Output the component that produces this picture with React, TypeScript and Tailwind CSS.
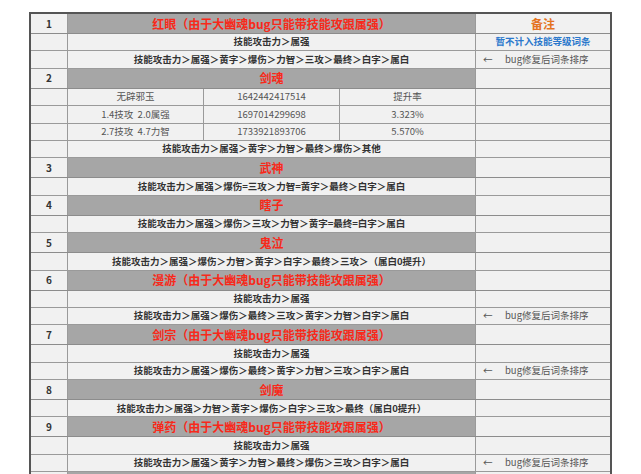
import React from 'react'

type Note = 'bug' | 'skip' | 'head' | undefined

type Row =
  | { kind: 'head'; no: string; title: string; note?: Note }
  | { kind: 'text'; text: string; note?: Note }
  | { kind: 'split'; cells: string[] }

const BUG = '（由于大幽魂bug只能带技能攻跟属强）'

const rows: Row[] = [
  { kind: 'head', no: '1', title: '红眼' + BUG, note: 'head' },
  { kind: 'text', text: '技能攻击力＞属强', note: 'skip' },
  { kind: 'text', text: '技能攻击力＞属强＞黄字＞爆伤＞力智＞三攻＞最终＞白字＞属白', note: 'bug' },
  { kind: 'head', no: '2', title: '剑魂' },
  { kind: 'split', cells: ['无辟邪玉', '1642442417514', '提升率'] },
  { kind: 'split', cells: ['1.4技攻  2.0属强', '1697014299698', '3.323%'] },
  { kind: 'split', cells: ['2.7技攻  4.7力智', '1733921893706', '5.570%'] },
  { kind: 'text', text: '技能攻击力＞属强＞黄字＞力智＞最终＞爆伤＞其他' },
  { kind: 'head', no: '3', title: '武神' },
  { kind: 'text', text: '技能攻击力＞属强＞爆伤=三攻＞力智=黄字＞最终＞白字＞属白' },
  { kind: 'head', no: '4', title: '瞎子' },
  { kind: 'text', text: '技能攻击力＞属强＞爆伤＞三攻＞力智＞黄字=最终=白字＞属白' },
  { kind: 'head', no: '5', title: '鬼泣' },
  { kind: 'text', text: '技能攻击力＞属强＞爆伤＞力智＞黄字＞白字＞最终＞三攻＞（属白0提升）' },
  { kind: 'head', no: '6', title: '漫游' + BUG },
  { kind: 'text', text: '技能攻击力＞属强' },
  { kind: 'text', text: '技能攻击力＞属强＞爆伤＞最终＞三攻＞黄字＞力智＞白字＞属白', note: 'bug' },
  { kind: 'head', no: '7', title: '剑宗' + BUG },
  { kind: 'text', text: '技能攻击力＞属强' },
  { kind: 'text', text: '技能攻击力＞属强＞爆伤＞最终＞黄字＞力智＞三攻＞白字＞属白', note: 'bug' },
  { kind: 'head', no: '8', title: '剑魔' },
  { kind: 'text', text: '技能攻击力＞属强＞力智＞黄字＞爆伤＞白字＞三攻＞最终（属白0提升）' },
  { kind: 'head', no: '9', title: '弹药' + BUG },
  { kind: 'text', text: '技能攻击力＞属强' },
  { kind: 'text', text: '技能攻击力＞属强＞黄字＞力智＞最终＞爆伤＞三攻＞白字＞属白', note: 'bug' },
  { kind: 'head', no: '', title: '' },
]

const NoteCell = ({ note }: { note: Note }) => {
  if (note === 'head')
    return <div className="flex-1 flex items-center justify-center text-[12px] font-bold text-[#e4731e]">备注</div>
  if (note === 'skip')
    return <div className="flex-1 flex items-center justify-center text-[9.5px] font-bold text-[#2a78cc]">暂不计入技能等级词条</div>
  if (note === 'bug')
    return (
      <div className="flex-1 flex items-center pl-[7px] text-[9.5px] text-[#555]">
        <span className="w-[22px]">←</span>
        <span>bug修复后词条排序</span>
      </div>
    )
  return <div className="flex-1" />
}

const TableRow = ({ row }: { row: Row }) => {
  if (row.kind === 'head') {
    return (
      <div className="flex h-[20px] border-b border-[#8c8c8c]">
        <div className="w-[37px] shrink-0 border-r border-[#9a9a9a] flex items-center justify-center text-[10px] font-bold text-[#333]">
          {row.no}
        </div>
        <div className="w-[408px] shrink-0 border-r border-[#9a9a9a] bg-[#a6a6a6] flex items-center justify-center text-[12px] font-bold text-[#f8291a]">
          {row.title}
        </div>
        <NoteCell note={row.note} />
      </div>
    )
  }
  if (row.kind === 'split') {
    return (
      <div className="flex h-[17.4px] border-b border-[#9a9a9a] text-[9.5px] text-[#555]">
        <div className="w-[37px] shrink-0 border-r border-[#9a9a9a]" />
        {row.cells.map((c, i) => (
          <div key={i} className="w-[136px] shrink-0 border-r border-[#9a9a9a] flex items-center justify-center whitespace-pre">
            {c}
          </div>
        ))}
        <div className="flex-1" />
      </div>
    )
  }
  return (
    <div className="flex h-[17.4px] border-b border-[#9a9a9a]">
      <div className="w-[37px] shrink-0 border-r border-[#9a9a9a]" />
      <div className="w-[408px] shrink-0 border-r border-[#9a9a9a] flex items-center justify-center text-[9.5px] font-bold text-[#333]">
        {row.text}
      </div>
      <NoteCell note={row.note} />
    </div>
  )
}

export default function App() {
  return (
    <div className="min-h-screen bg-white pt-3 font-['Noto_Sans_CJK_SC','Noto_Sans',sans-serif] leading-none">
      <div className="mx-auto w-[583px] border-2 border-b-0 border-[#555] bg-[#f1f1f1]">
        {rows.map((r, i) => (
          <TableRow key={i} row={r} />
        ))}
      </div>
    </div>
  )
}
